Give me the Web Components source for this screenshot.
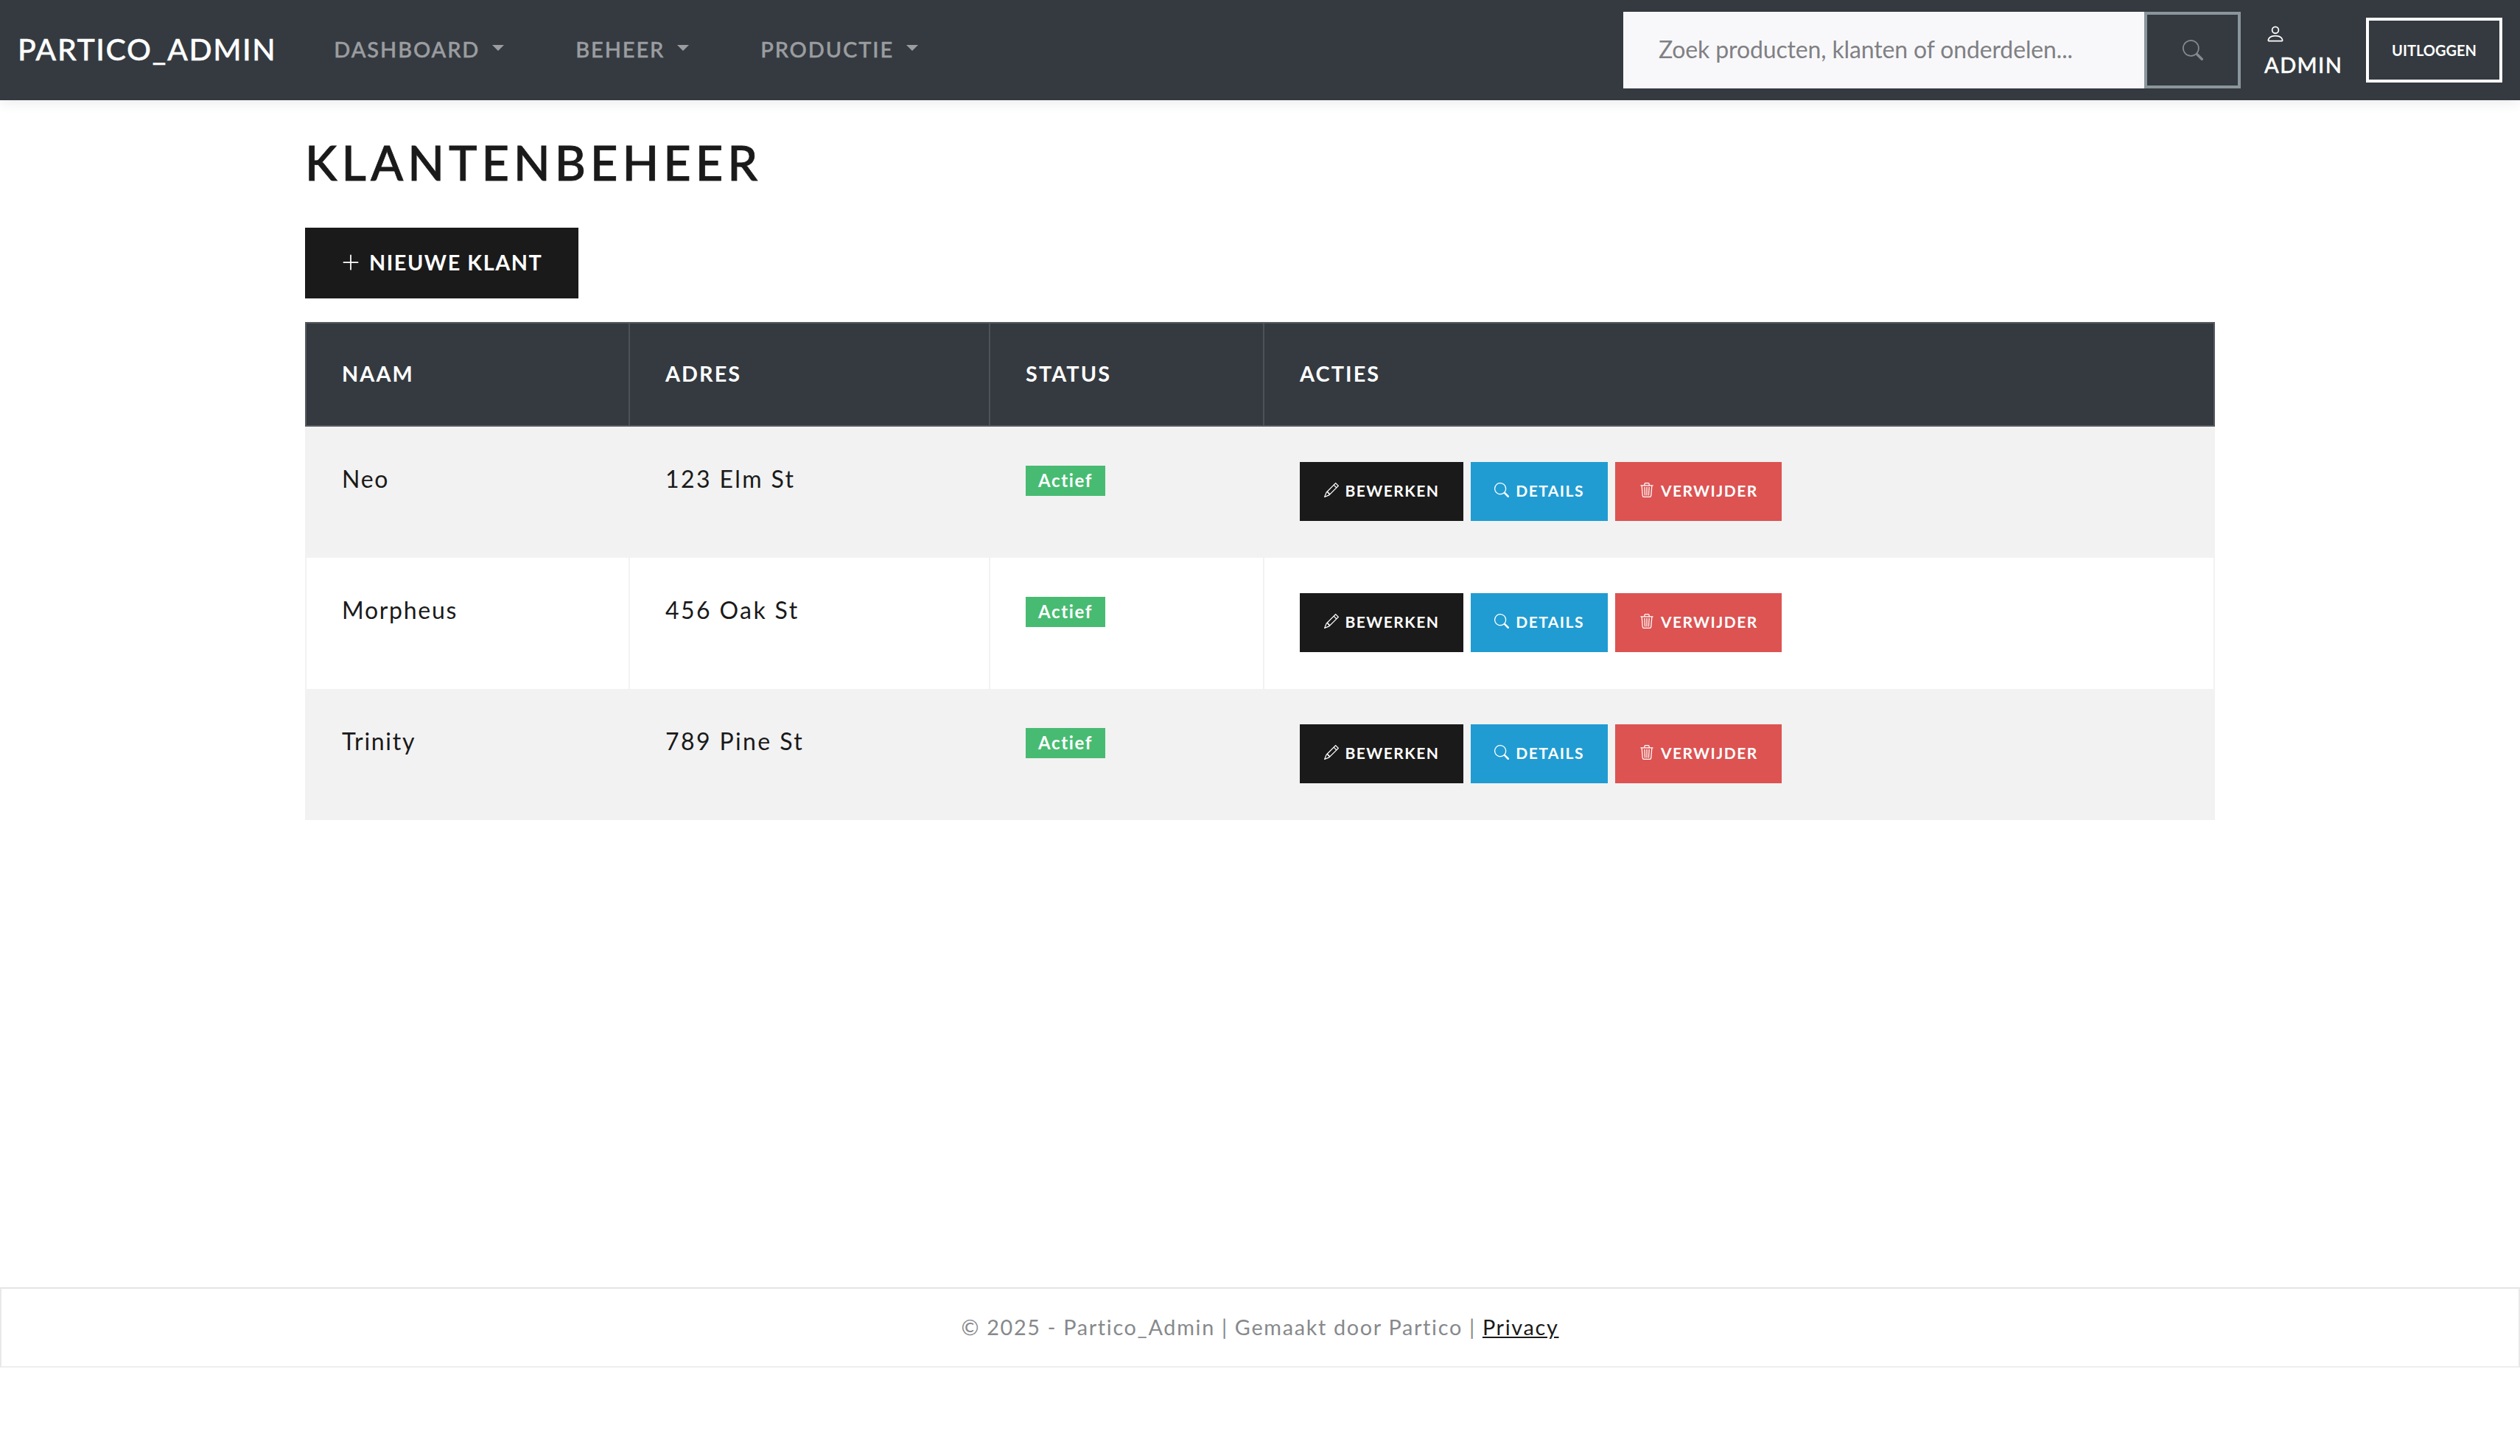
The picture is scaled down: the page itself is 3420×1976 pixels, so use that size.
<!DOCTYPE html>
<html lang="nl">
<head>
<meta charset="utf-8">
<title>Klantenbeheer</title>
<style>
  html, body { margin: 0; background: #fff; }
  body { font-family: Lato, "Open Sans", sans-serif; color: #1a1a1a; }
</style>
</head>
<body>
<admin-page>
  <top-navbar></top-navbar>
  <customer-page></customer-page>
  <site-footer></site-footer>
</admin-page>

<script>
const ICONS = {
  search: '<path d="M11.742 10.344a6.5 6.5 0 1 0-1.397 1.398h-.001c.03.04.062.078.098.115l3.85 3.85a1 1 0 0 0 1.415-1.414l-3.85-3.85a1.007 1.007 0 0 0-.115-.1zM12 6.5a5.5 5.5 0 1 1-11 0 5.5 5.5 0 0 1 11 0z"/>',
  plus: '<path d="M8 2a.5.5 0 0 1 .5.5v5h5a.5.5 0 0 1 0 1h-5v5a.5.5 0 0 1-1 0v-5h-5a.5.5 0 0 1 0-1h5v-5A.5.5 0 0 1 8 2Z"/>',
  person: '<path d="M8 8a3 3 0 1 0 0-6 3 3 0 0 0 0 6Zm2-3a2 2 0 1 1-4 0 2 2 0 0 1 4 0Zm4 8c0 1-1 1-1 1H3s-1 0-1-1 1-4 6-4 6 3 6 4Zm-1-.004c-.001-.246-.154-.986-.832-1.664C11.516 10.68 10.289 10 8 10c-2.29 0-3.516.68-4.168 1.332-.678.678-.83 1.418-.832 1.664h10Z"/>',
  pencil: '<path d="M12.146.146a.5.5 0 0 1 .708 0l3 3a.5.5 0 0 1 0 .708l-10 10a.5.5 0 0 1-.168.11l-5 2a.5.5 0 0 1-.65-.65l2-5a.5.5 0 0 1 .11-.168l10-10zM11.207 2.5 13.5 4.793 14.793 3.5 12.5 1.207 11.207 2.5zm1.586 3L10.5 3.207 4 9.707V10h.5a.5.5 0 0 1 .5.5v.5h.5a.5.5 0 0 1 .5.5v.5h.293l6.5-6.5zm-9.761 5.175-.106.106-1.528 3.821 3.821-1.528.106-.106A.5.5 0 0 1 5 12.5V12h-.5a.5.5 0 0 1-.5-.5V11h-.5a.5.5 0 0 1-.468-.325z"/>',
  trash: '<path d="M6.5 1h3a.5.5 0 0 1 .5.5v1H6v-1a.5.5 0 0 1 .5-.5ZM11 2.5v-1A1.5 1.5 0 0 0 9.5 0h-3A1.5 1.5 0 0 0 5 1.5v1H2.506a.58.58 0 0 0-.01 0H1.5a.5.5 0 0 0 0 1h.538l.853 10.66A2 2 0 0 0 4.885 16h6.23a2 2 0 0 0 1.994-1.84l.853-10.66h.538a.5.5 0 0 0 0-1h-.997a.58.58 0 0 0-.01 0H11Zm1.958 1-.846 10.58a1 1 0 0 1-.997.92h-6.23a1 1 0 0 1-.997-.92L3.042 3.5h9.916Zm-7.487 1a.5.5 0 0 1 .528.47l.5 8.5a.5.5 0 0 1-.998.06L5 5.03a.5.5 0 0 1 .47-.53Zm5.058 0a.5.5 0 0 1 .47.53l-.5 8.5a.5.5 0 1 1-.998-.06l.5-8.5a.5.5 0 0 1 .528-.47ZM8 4.5a.5.5 0 0 1 .5.5v8.5a.5.5 0 0 1-1 0V5a.5.5 0 0 1 .5-.5Z"/>'
};
const icon = (name, size) =>
  `<svg width="${size}" height="${size}" viewBox="0 0 16 16" fill="currentColor" aria-hidden="true">${ICONS[name]}</svg>`;

// Outer page shell
class AdminPage extends HTMLElement {
  constructor() {
    super();
    this.attachShadow({ mode: 'open' });
    this.shadowRoot.innerHTML = `
      <style>
        :host { display: flex; flex-direction: column; min-height: 1976px; }
      </style>
      <slot></slot>`;
  }
}

class NavItem extends HTMLElement {
  constructor() {
    super();
    this.attachShadow({ mode: 'open' });
    this.shadowRoot.innerHTML = `
      <style>
        :host { display: inline-flex; align-items: center; color: #9b9da0; font-size: 29px; font-weight: 500; letter-spacing: 1.9px; padding-bottom: 4px; -webkit-text-stroke: .5px #9b9da0; }
        .caret { width: 0; height: 0; margin-left: 17px; margin-top: -3px; border-top: 8px solid #9b9da0; border-left: 8px solid transparent; border-right: 8px solid transparent; }
      </style>
      <slot></slot><span class="caret"></span>`;
  }
}

class TopNavbar extends HTMLElement {
  constructor() {
    super();
    this.attachShadow({ mode: 'open' });
    this.shadowRoot.innerHTML = `
      <style>
        :host { display: flex; align-items: center; height: 136px; flex: none; background: #343a40; box-shadow: 0 4px 16px rgba(0,0,0,.08); color: #fff; position: relative; z-index: 1; }
        .brand { margin-left: 24px; padding-bottom: 4px; font-size: 41px; font-weight: 500; letter-spacing: 1.6px; white-space: nowrap; -webkit-text-stroke: .4px #fff; }
        nav { display: flex; gap: 97px; margin-left: 78px; }
        .right { margin-left: auto; display: flex; align-items: center; padding-right: 24px; }
        .search { display: flex; height: 104px; }
        .field { width: 707px; box-sizing: border-box; background: #f8f8fa; padding: 0 0 3px 48px; display: flex; align-items: center; font-size: 32px; letter-spacing: -.14px; color: #808084; white-space: nowrap; font-weight: 400; }
        .go { width: 131px; box-sizing: border-box; border: 4px solid #8b959c; display: flex; align-items: center; justify-content: center; color: #828a90; }
        .user { margin-left: 32px; width: 138px; padding-top: 6px; display: flex; flex-direction: column; align-items: flex-start; font-size: 29px; font-weight: 500; letter-spacing: 1.4px; line-height: 44px; -webkit-text-stroke: .4px #fff; }
        .user svg { margin: 0 0 6px 1px; display: block; }
        .logout { box-sizing: border-box; width: 185px; height: 88px; border: 4px solid #fff; display: flex; align-items: center; justify-content: center; font-size: 20px; font-weight: 700; white-space: nowrap; }
      </style>
      <div class="brand">PARTICO_ADMIN</div>
      <nav>
        <nav-item>DASHBOARD</nav-item>
        <nav-item>BEHEER</nav-item>
        <nav-item>PRODUCTIE</nav-item>
      </nav>
      <div class="right">
        <div class="search">
          <div class="field">Zoek producten, klanten of onderdelen...</div>
          <div class="go">${icon('search', 28)}</div>
        </div>
        <div class="user">${icon('person', 28)}<span>ADMIN</span></div>
        <div class="logout">UITLOGGEN</div>
      </div>`;
  }
}

class ActionButton extends HTMLElement {
  constructor() {
    super();
    this.attachShadow({ mode: 'open' });
  }
  connectedCallback() {
    const bg = { dark: '#1a1a1a', info: '#209cd2', danger: '#dc5352' }[this.getAttribute('kind')];
    this.shadowRoot.innerHTML = `
      <style>
        :host { display: inline-flex; align-items: center; justify-content: center; gap: 9px; box-sizing: border-box; height: 80px; padding: 0 32.5px 3px; background: ${bg}; color: #fff; font-size: 21px; font-weight: 700; letter-spacing: 1.45px; white-space: nowrap; }
        svg { display: block; margin-top: -1px; }
      </style>
      ${icon(this.getAttribute('icon'), 20)}<slot></slot>`;
  }
}

class StatusBadge extends HTMLElement {
  constructor() {
    super();
    this.attachShadow({ mode: 'open' });
    this.shadowRoot.innerHTML = `
      <style>
        :host { display: inline-flex; align-items: center; justify-content: center; width: 108px; height: 41px; padding-bottom: 2px; box-sizing: border-box; background: #48bb72; color: #fff; font-size: 24px; font-weight: 700; letter-spacing: 1.6px; }
      </style>
      <slot></slot>`;
  }
}

// One table row; the cells are the host's grid items
class CustomerRow extends HTMLElement {
  constructor() {
    super();
    this.attachShadow({ mode: 'open' });
  }
  connectedCallback() {
    const name = this.getAttribute('name');
    const address = this.getAttribute('address');
    this.shadowRoot.innerHTML = `
      <style>
        :host { display: grid; grid-template-columns: 439px 489px 372px 1fr; height: 178px; font-size: 32px; color: #1a1a1a; background: #fff; border-left: 2px solid #f2f2f2; border-right: 2px solid #f2f2f2; box-sizing: border-box; }
        :host([shaded]) { background: #f2f2f2; }
        .cell { box-sizing: border-box; padding: 49px 48px 0; border-right: 2px solid #f2f2f2; line-height: 44px; }
        .name { letter-spacing: 1.7px; }
        .address { letter-spacing: 2.4px; }
        .cell.status { padding-top: 53px; display: flex; align-items: flex-start; }
        .cell.actions { border-right: 0; padding-top: 48px; display: flex; gap: 10px; align-items: flex-start; }
      </style>
      <div class="cell name">${name}</div>
      <div class="cell address">${address}</div>
      <div class="cell status"><status-badge>Actief</status-badge></div>
      <div class="cell actions">
        <action-button kind="dark" icon="pencil">BEWERKEN</action-button>
        <action-button kind="info" icon="search">DETAILS</action-button>
        <action-button kind="danger" icon="trash">VERWIJDER</action-button>
      </div>`;
  }
}

class CustomerTable extends HTMLElement {
  constructor() {
    super();
    this.attachShadow({ mode: 'open' });
    this.shadowRoot.innerHTML = `
      <style>
        :host { display: block; }
        .head { display: grid; grid-template-columns: 439px 489px 372px 1fr; box-sizing: border-box; height: 142px; background: #343a40; border: 2px solid #565b60; color: #fff; font-size: 28.8px; font-weight: 700; letter-spacing: 2.1px; }
        .head div { display: flex; align-items: center; padding: 0 0 3px 48px; border-right: 2px solid #4d5257; }
        .head div:last-child { border-right: 0; }
      </style>
      <div class="head"><div>NAAM</div><div>ADRES</div><div>STATUS</div><div>ACTIES</div></div>
      <slot></slot>`;
  }
}

class CustomerPage extends HTMLElement {
  constructor() {
    super();
    this.attachShadow({ mode: 'open' });
    this.shadowRoot.innerHTML = `
      <style>
        :host { display: block; box-sizing: border-box; height: 1611px; flex: none; padding: 0 414px; }
        h1 { margin: 0; padding-top: 45px; height: 128px; line-height: 78px; font-size: 65px; font-weight: 500; letter-spacing: 6px; color: #1a1a1a; -webkit-text-stroke: .8px #1a1a1a; }
        .new { display: inline-flex; align-items: center; box-sizing: border-box; width: 371px; height: 96px; padding: 0 0 2px 48px; gap: 11px; background: #1a1a1a; color: #fff; font-size: 28.8px; font-weight: 700; letter-spacing: 1.55px; white-space: nowrap; margin-bottom: 32px; vertical-align: top; }
        .new svg { display: block; }
      </style>
      <h1>KLANTENBEHEER</h1>
      <div class="new">${icon('plus', 28)}NIEUWE KLANT</div>
      <customer-table>
        <customer-row shaded name="Neo" address="123 Elm St"></customer-row>
        <customer-row name="Morpheus" address="456 Oak St"></customer-row>
        <customer-row shaded name="Trinity" address="789 Pine St"></customer-row>
      </customer-table>`;
  }
}

class SiteFooter extends HTMLElement {
  constructor() {
    super();
    this.attachShadow({ mode: 'open' });
    this.shadowRoot.innerHTML = `
      <style>
        :host { display: flex; align-items: center; justify-content: center; height: 109px; padding-bottom: 2px; flex: none; box-sizing: border-box; border: 2px solid #e8e8e8; border-top-color: #e4e4e4; border-bottom-color: #eee; font-size: 28.8px; letter-spacing: 1.68px; color: #87898c; white-space: pre; }
        a { color: #1a1a1a; text-decoration: underline; }
      </style>
      <span>© 2025 - Partico_Admin | Gemaakt door Partico | <a href="#">Privacy</a></span>`;
  }
}

customElements.define('nav-item', NavItem);
customElements.define('top-navbar', TopNavbar);
customElements.define('action-button', ActionButton);
customElements.define('status-badge', StatusBadge);
customElements.define('customer-row', CustomerRow);
customElements.define('customer-table', CustomerTable);
customElements.define('customer-page', CustomerPage);
customElements.define('site-footer', SiteFooter);
customElements.define('admin-page', AdminPage);
</script>
</body>
</html>
